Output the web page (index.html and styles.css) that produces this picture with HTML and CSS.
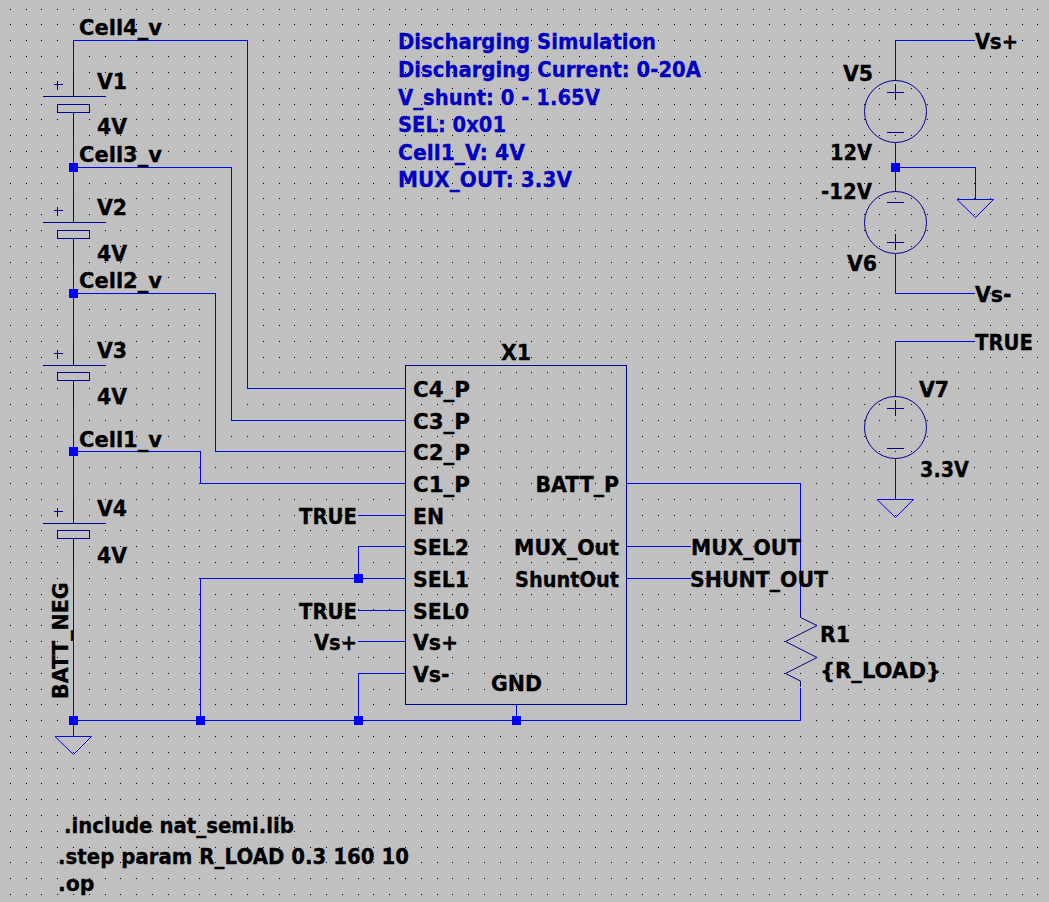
FILE: index.html
```html
<!DOCTYPE html>
<html lang="en">
<head>
<meta charset="utf-8">
<title>Discharging Simulation schematic</title>
<link rel="stylesheet" href="styles.css">
</head>
<body>
<svg class="sheet" width="1049" height="902" viewBox="0 0 1049 902" xmlns="http://www.w3.org/2000/svg">
  <path id="grid" class="grid"/>

  <!-- wires -->
  <g class="wire" transform="translate(.5 .5)">
    <path d="M73 72V40H247V388H405"/>
    <path d="M73 135V198M73 261V341M73 404V499M73 562V736"/>
    <path d="M73 167H231V420H405"/>
    <path d="M73 293H215V451H405"/>
    <path d="M73 451H200V483H405"/>
    <path d="M357 515H405M357 610H405M357 641H405"/>
    <path d="M405 546H358V578M200 720V578H405"/>
    <path d="M405 673H358V720M73 720H800V687M516 704V720"/>
    <path d="M626 483H800V612M626 546H690M626 578H690"/>
    <path d="M974 40H895V80M895 142V191M895 167H975V199M895 253V293H974"/>
    <path d="M974 341H895V396M895 458V499"/>
  </g>

  <!-- batteries -->
  <g class="symbol" transform="translate(.5 .5)">
    <path d="M73 72V96M42 96H105M73 112V135M53 84H62M57 80V89"/>
    <rect x="57" y="104" width="32" height="8"/>
    <path d="M73 198V222M42 222H105M73 238V261M53 210H62M57 206V215"/>
    <rect x="57" y="230" width="32" height="8"/>
    <path d="M73 341V365M42 365H105M73 380V404M53 353H62M57 349V358"/>
    <rect x="57" y="372" width="32" height="8"/>
    <path d="M73 499V523M42 523H105M73 538V562M53 511H62M57 507V516"/>
    <rect x="57" y="530" width="32" height="8"/>
    <!-- subcircuit box -->
    <rect x="405" y="365" width="221" height="339"/>
  </g>

  <!-- sources and resistor -->
  <g class="symbol-soft">
    <circle cx="895.500" cy="111.500" r="31"/>
    <path d="M887 92.500H904M895.500 84V100M887 132.500H904"/>
    <circle cx="895.500" cy="222.500" r="31"/>
    <path d="M887 202.500H904M887 242.500H904M895.500 234V250"/>
    <circle cx="895.500" cy="427.500" r="31"/>
    <path d="M887 408.500H904M895.500 400V416M887 448.500H904"/>
    <path d="M800.500 612V617.500L817 625.500L785.500 641.500L817 657.500L785.500 673.500L800.500 681V687"/>
  </g>

  <!-- grounds -->
  <g class="ground">
    <path d="M55 736.500H91.500L73.500 754.500Z"/>
    <path d="M957 199.500H993.500L975.500 217.500Z"/>
    <path d="M877 499.500H913.500L895.500 517.500Z"/>
  </g>

  <!-- junctions -->
  <g class="junction">
    <rect x="69" y="163" width="9" height="9"/>
    <rect x="69" y="289" width="9" height="9"/>
    <rect x="69" y="447" width="9" height="9"/>
    <rect x="69" y="716" width="9" height="9"/>
    <rect x="196" y="716" width="9" height="9"/>
    <rect x="354" y="716" width="9" height="9"/>
    <rect x="512" y="716" width="9" height="9"/>
    <rect x="354" y="574" width="9" height="9"/>
    <rect x="891" y="163" width="9" height="9"/>
  </g>

  <!-- labels -->
  <g class="label">
    <text x="79" y="35" textLength="83" lengthAdjust="spacingAndGlyphs">Cell4_v</text>
    <text x="97" y="89">V1</text>
    <text x="97" y="134">4V</text>
    <text x="79" y="162" textLength="83" lengthAdjust="spacingAndGlyphs">Cell3_v</text>
    <text x="97" y="215">V2</text>
    <text x="97" y="261">4V</text>
    <text x="79" y="288" textLength="83" lengthAdjust="spacingAndGlyphs">Cell2_v</text>
    <text x="97" y="358">V3</text>
    <text x="97" y="404">4V</text>
    <text x="79" y="447" textLength="83" lengthAdjust="spacingAndGlyphs">Cell1_v</text>
    <text x="97" y="516">V4</text>
    <text x="97" y="563">4V</text>
    <text transform="translate(68 699) rotate(-90)">BATT_NEG</text>

    <text x="501" y="360">X1</text>
    <text x="413" y="397" textLength="57" lengthAdjust="spacingAndGlyphs">C4_P</text>
    <text x="413" y="429" textLength="57" lengthAdjust="spacingAndGlyphs">C3_P</text>
    <text x="413" y="460" textLength="57" lengthAdjust="spacingAndGlyphs">C2_P</text>
    <text x="413" y="492" textLength="57" lengthAdjust="spacingAndGlyphs">C1_P</text>
    <text x="413" y="524">EN</text>
    <text x="413" y="555">SEL2</text>
    <text x="413" y="587">SEL1</text>
    <text x="413" y="619">SEL0</text>
    <text x="413" y="650">Vs+</text>
    <text x="413" y="682">Vs-</text>
    <text x="491" y="691">GND</text>
    <text class="end" x="619" y="492">BATT_P</text>
    <text class="end" x="619" y="555">MUX_Out</text>
    <text x="515" y="587" textLength="104" lengthAdjust="spacingAndGlyphs">ShuntOut</text>
    <text x="299" y="524" textLength="58" lengthAdjust="spacingAndGlyphs">TRUE</text>
    <text x="299" y="619" textLength="58" lengthAdjust="spacingAndGlyphs">TRUE</text>
    <text x="314" y="650" textLength="43" lengthAdjust="spacingAndGlyphs">Vs+</text>

    <text x="691" y="555" textLength="110" lengthAdjust="spacingAndGlyphs">MUX_OUT</text>
    <text x="690" y="587">SHUNT_OUT</text>
    <text x="820" y="642">R1</text>
    <text x="820" y="678" textLength="121" lengthAdjust="spacingAndGlyphs">{R_LOAD}</text>

    <text x="975" y="49" textLength="43" lengthAdjust="spacingAndGlyphs">Vs+</text>
    <text x="843" y="81">V5</text>
    <text x="830" y="160" textLength="42" lengthAdjust="spacingAndGlyphs">12V</text>
    <text x="821" y="199" textLength="51" lengthAdjust="spacingAndGlyphs">-12V</text>
    <text x="847" y="271">V6</text>
    <text x="975" y="302">Vs-</text>
    <text x="975" y="350" textLength="58" lengthAdjust="spacingAndGlyphs">TRUE</text>
    <text x="919" y="397">V7</text>
    <text x="920" y="477" textLength="49" lengthAdjust="spacingAndGlyphs">3.3V</text>

    <text x="64" y="833" textLength="230" lengthAdjust="spacingAndGlyphs">.include nat_semi.lib</text>
    <text x="58" y="864" textLength="351" lengthAdjust="spacingAndGlyphs">.step param R_LOAD 0.3 160 10</text>
    <text x="58" y="891">.op</text>
  </g>

  <!-- comment block -->
  <g class="label note">
    <text x="398" y="49" textLength="258" lengthAdjust="spacingAndGlyphs">Discharging Simulation</text>
    <text x="398" y="77" textLength="303" lengthAdjust="spacingAndGlyphs">Discharging Current: 0-20A</text>
    <text x="398" y="105" textLength="202" lengthAdjust="spacingAndGlyphs">V_shunt: 0 - 1.65V</text>
    <text x="398" y="132" textLength="108" lengthAdjust="spacingAndGlyphs">SEL: 0x01</text>
    <text x="398" y="160" textLength="127" lengthAdjust="spacingAndGlyphs">Cell1_V: 4V</text>
    <text x="398" y="187" textLength="174" lengthAdjust="spacingAndGlyphs">MUX_OUT: 3.3V</text>
  </g>
</svg>
<script src="grid.js"></script>
</body>
</html>
```

FILE: styles.css
```css
html, body {
  margin: 0;
  padding: 0;
  background: #c0c0c0;
}

.sheet {
  display: block;
  background: #c0c0c0;
}

.grid {
  fill: #000;
  shape-rendering: crispEdges;
}

.wire {
  fill: none;
  stroke: #0000ff;
  stroke-width: 1;
  shape-rendering: crispEdges;
}

.symbol {
  fill: none;
  stroke: #000090;
  stroke-width: 1;
  shape-rendering: crispEdges;
}

.symbol-soft {
  fill: none;
  stroke: #000090;
  stroke-width: 1;
}

.ground {
  fill: none;
  stroke: #0000ff;
  stroke-width: 1;
}

.junction {
  fill: #0000ff;
}

.label {
  font-family: "DejaVu Sans", Verdana, sans-serif;
  font-weight: 700;
  font-size: 20.5px;
  fill: #000;
  stroke: #000;
  stroke-width: 0.3px;
}

.label .end {
  text-anchor: end;
}

.note {
  fill: #0000c0;
  stroke: #0000c0;
}
```

FILE: grid.js
```js
// LTspice style dot grid: one pixel per grid point, pitch 15.81px, locked to the wires.
var pitch = 15.81;
var d = "";
for (var i = -4; i < 63; i++) {
  for (var j = -2; j < 55; j++) {
    var x = Math.round(73 + pitch * i);
    var y = Math.round(40.3 + pitch * j);
    if (x >= 0 && y >= 0) d += "M" + x + " " + y + "h1v1h-1z";
  }
}
document.getElementById("grid").setAttribute("d", d);
```
